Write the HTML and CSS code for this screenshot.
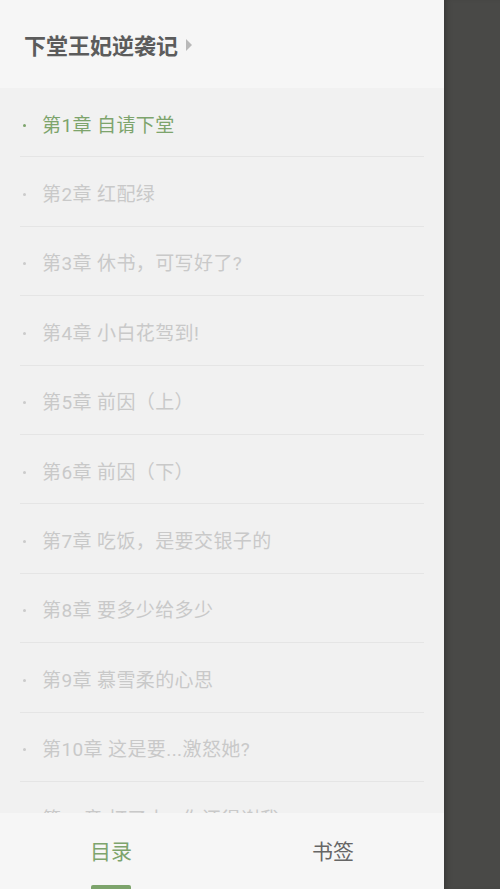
FILE: index.html
```html
<!DOCTYPE html>
<html lang="zh">
<head>
<meta charset="utf-8">
<title>目录</title>
<link rel="stylesheet" href="styles.css">
</head>
<body>
<div class="screen">
  <aside class="drawer">
    <header class="book-head">
      <h1 class="book-title">下堂王妃逆袭记</h1>
      <span class="caret"></span>
    </header>
    <ul class="chapters">
      <li class="chapter current"><span class="dot"></span><span class="name">第1章 自请下堂</span></li>
      <li class="chapter"><span class="dot"></span><span class="name">第2章 红配绿</span></li>
      <li class="chapter"><span class="dot"></span><span class="name">第3章 休书，可写好了?</span></li>
      <li class="chapter"><span class="dot"></span><span class="name">第4章 小白花驾到!</span></li>
      <li class="chapter"><span class="dot"></span><span class="name">第5章 前因（上）</span></li>
      <li class="chapter"><span class="dot"></span><span class="name">第6章 前因（下）</span></li>
      <li class="chapter"><span class="dot"></span><span class="name">第7章 吃饭，是要交银子的</span></li>
      <li class="chapter"><span class="dot"></span><span class="name">第8章 要多少给多少</span></li>
      <li class="chapter"><span class="dot"></span><span class="name">第9章 慕雪柔的心思</span></li>
      <li class="chapter"><span class="dot"></span><span class="name">第10章 这是要...激怒她?</span></li>
      <li class="chapter"><span class="dot"></span><span class="name">第11章 打了小...你还得谢我</span></li>
    </ul>
    <nav class="tabs">
      <div class="tab active">目录</div>
      <div class="tab">书签</div>
    </nav>
  </aside>
  <div class="scrim"></div>
</div>
</body>
</html>
```

FILE: styles.css
```css
* { box-sizing: border-box; }
html, body {
  margin: 0;
  padding: 0;
  width: 500px;
  height: 889px;
  overflow: hidden;
  font-family: Roboto, "Noto Sans CJK SC", sans-serif;
}
.screen {
  display: flex;
  width: 500px;
  height: 889px;
}
.drawer {
  width: 444px;
  flex: none;
  display: flex;
  flex-direction: column;
  background: #f1f1f1;
  height: 100%;
}
.scrim {
  flex: 1;
  background: #494947;
  box-shadow: inset 6px 0 6px -4px rgba(0,0,0,0.25);
}
.book-head {
  height: 88px;
  flex: none;
  background: #f6f6f6;
  display: flex;
  align-items: center;
  padding-left: 24px;
  gap: 8px;
}
.book-title {
  margin: 0;
  font-family: "Noto Sans CJK SC", sans-serif;
  font-size: 22px;
  font-weight: 700;
  color: #5c5c5c;
  line-height: 1;
}
.caret {
  width: 0;
  height: 0;
  border-top: 6px solid transparent;
  border-bottom: 6px solid transparent;
  border-left: 6px solid #b9b9b9;
  margin-top: 1px;
}
.chapters {
  list-style: none;
  margin: 0;
  padding: 0;
  flex: 1;
  overflow: hidden;
  min-height: 0;
}
.chapter {
  height: 69.4px;
  margin: 0 20px;
  border-bottom: 1px solid #e5e5e5;
  display: flex;
  align-items: center;
  padding-left: 3px;
  padding-top: 6px;
  font-size: 19px;
  letter-spacing: 0.4px;
  color: #c9c9c9;
  white-space: nowrap;
}
.dot {
  width: 3px;
  height: 3px;
  border-radius: 50%;
  background: #cbcbcb;
  margin-right: 16px;
  flex: none;
}
.chapter.current { color: #7da46c; }
.chapter.current .dot { background: #7da46c; }
.name { line-height: 1; }
.tabs {
  height: 76px;
  flex: none;
  background: #f6f6f6;
  display: flex;
}
.tab {
  flex: 1;
  display: flex;
  align-items: center;
  justify-content: center;
  font-size: 21px;
  color: #666;
  position: relative;
  padding-bottom: 2px;
}
.tab.active { color: #7da46c; }
.tab.active::after {
  content: "";
  position: absolute;
  bottom: 0;
  left: 50%;
  width: 40px;
  margin-left: -20px;
  height: 4px;
  border-radius: 2px 2px 0 0;
  background: #7da46c;
}
```
